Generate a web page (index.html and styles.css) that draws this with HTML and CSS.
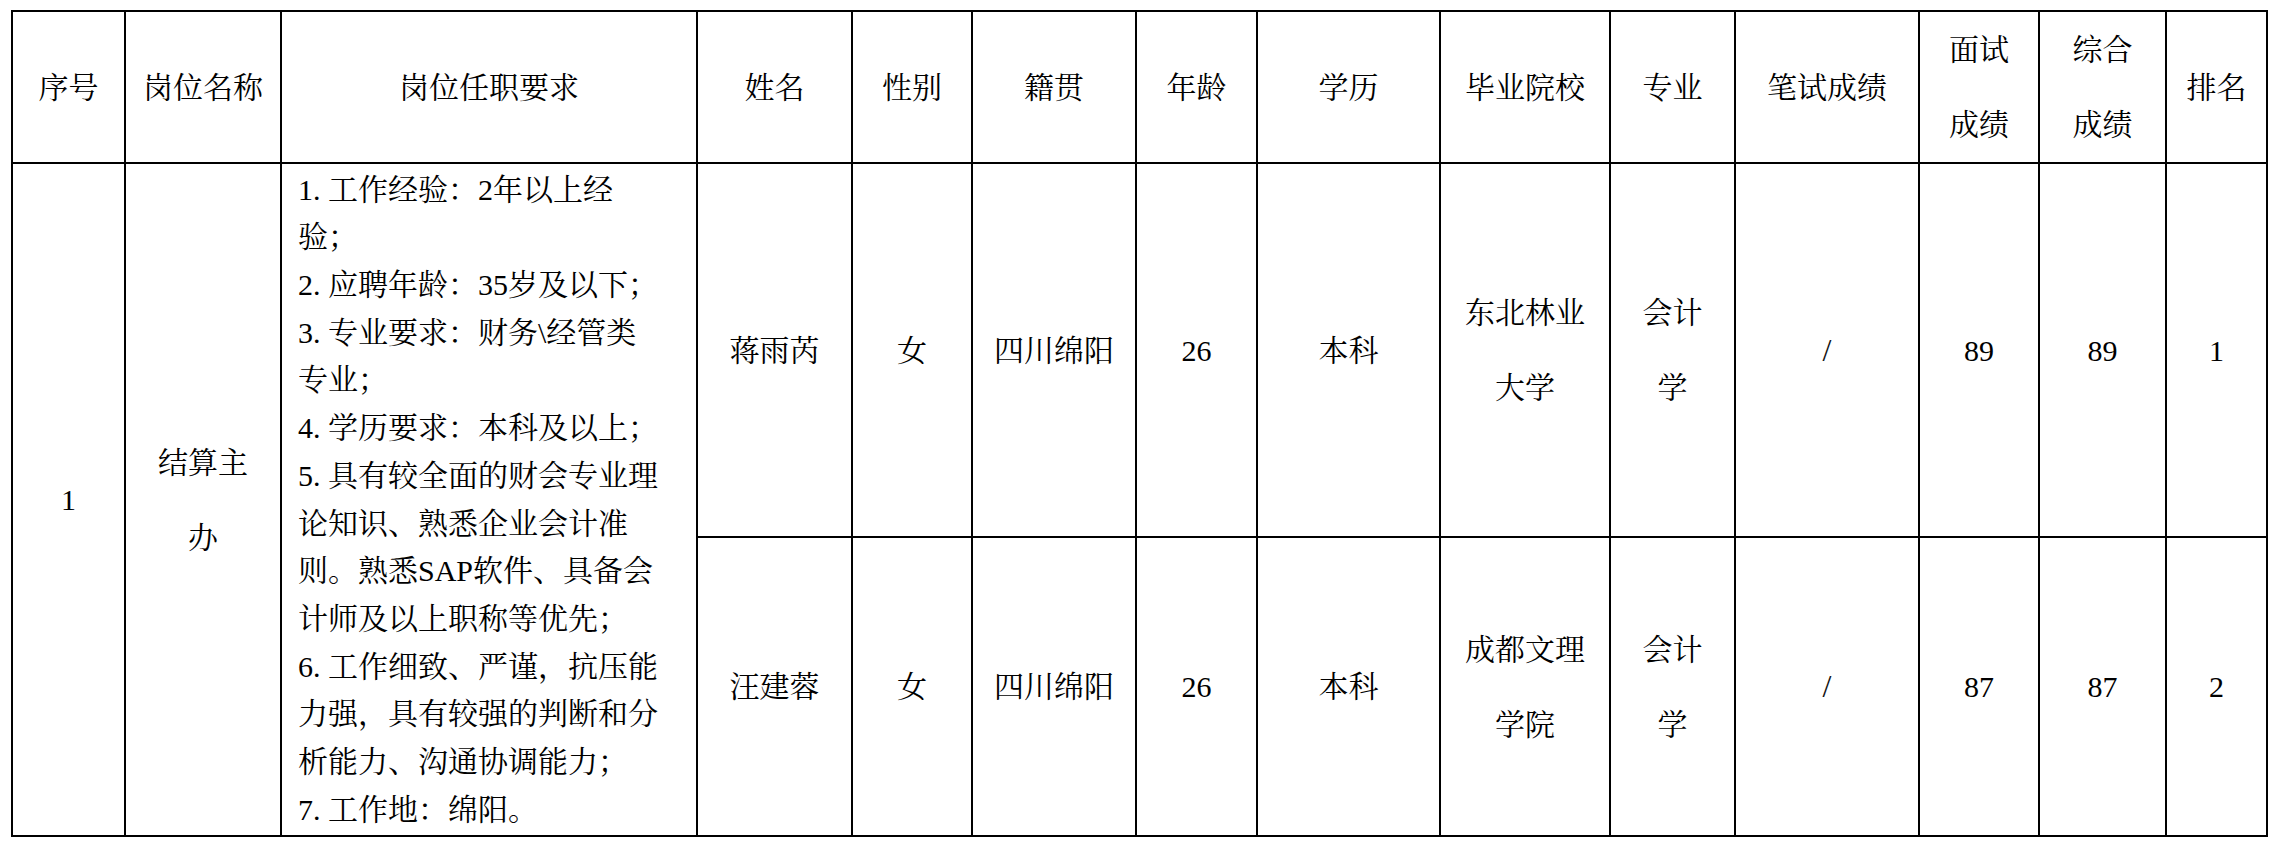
FILE: index.html
```html
<!DOCTYPE html>
<html lang="zh-CN">
<head>
<meta charset="utf-8">
<title>结算主办 面试成绩</title>
<link rel="stylesheet" href="styles.css">
</head>
<body>
<table class="grid">
  <colgroup>
    <col class="c-no">
    <col class="c-post">
    <col class="c-req">
    <col class="c-name">
    <col class="c-sex">
    <col class="c-home">
    <col class="c-age">
    <col class="c-edu">
    <col class="c-school">
    <col class="c-major">
    <col class="c-written">
    <col class="c-interview">
    <col class="c-total">
    <col class="c-rank">
  </colgroup>
  <thead>
    <tr class="head-row">
      <th>序号</th>
      <th>岗位名称</th>
      <th>岗位任职要求</th>
      <th>姓名</th>
      <th>性别</th>
      <th>籍贯</th>
      <th>年龄</th>
      <th>学历</th>
      <th>毕业院校</th>
      <th>专业</th>
      <th>笔试成绩</th>
      <th>面试<br>成绩</th>
      <th>综合<br>成绩</th>
      <th>排名</th>
    </tr>
  </thead>
  <tbody>
    <tr class="row-a">
      <td rowspan="2">1</td>
      <td rowspan="2">结算主<br>办</td>
      <td rowspan="2" class="req"><span class="num">1.</span>工作经验：2年以上经<br>验；<br><span class="num">2.</span>应聘年龄：35岁及以下；<br><span class="num">3.</span>专业要求：财务\经管类<br>专业；<br><span class="num">4.</span>学历要求：本科及以上；<br><span class="num">5.</span>具有较全面的财会专业理<br>论知识、熟悉企业会计准<br>则。熟悉SAP软件、具备会<br>计师及以上职称等优先；<br><span class="num">6.</span>工作细致、严谨，抗压能<br>力强，具有较强的判断和分<br>析能力、沟通协调能力；<br><span class="num">7.</span>工作地：绵阳。</td>
      <td>蒋雨芮</td>
      <td>女</td>
      <td>四川绵阳</td>
      <td>26</td>
      <td>本科</td>
      <td>东北林业<br>大学</td>
      <td>会计<br>学</td>
      <td class="slash">/</td>
      <td>89</td>
      <td>89</td>
      <td>1</td>
    </tr>
    <tr class="row-b">
      <td>汪建蓉</td>
      <td>女</td>
      <td>四川绵阳</td>
      <td>26</td>
      <td>本科</td>
      <td>成都文理<br>学院</td>
      <td>会计<br>学</td>
      <td class="slash">/</td>
      <td>87</td>
      <td>87</td>
      <td>2</td>
    </tr>
  </tbody>
</table>
</body>
</html>
```

FILE: styles.css
```css
html, body {
  margin: 0;
  padding: 0;
  background: #ffffff;
}

body {
  padding: 10px 0 0 11px;
  color: #000000;
  font-family: "Liberation Serif", "Noto Serif CJK SC", "Noto Sans CJK SC", serif;
  font-size: 30px;
}

.grid {
  border-collapse: collapse;
  table-layout: fixed;
  width: 2257px;
  border: 2px solid #000;
}

.c-no { width: 113px; }
.c-post { width: 156px; }
.c-req { width: 416px; }
.c-name { width: 155px; }
.c-sex { width: 120px; }
.c-home { width: 164px; }
.c-age { width: 121px; }
.c-edu { width: 183px; }
.c-school { width: 170px; }
.c-major { width: 125px; }
.c-written { width: 184px; }
.c-interview { width: 120px; }
.c-total { width: 127px; }
.c-rank { width: 101px; }

.grid th,
.grid td {
  border: 2px solid #000;
  padding: 0;
  text-align: center;
  vertical-align: middle;
  font-weight: normal;
  line-height: 75px;
}

.head-row { height: 150px; }
.row-a { height: 374px; }
.row-b { height: 299px; }

.grid td.req {
  text-align: left;
  line-height: 47.7px;
  padding: 0 0 0 16px;
}

.req .num {
  display: inline-block;
  width: 30px;
}

.grid td.slash {
  color: #111;
  font-size: 32px;
}
```
